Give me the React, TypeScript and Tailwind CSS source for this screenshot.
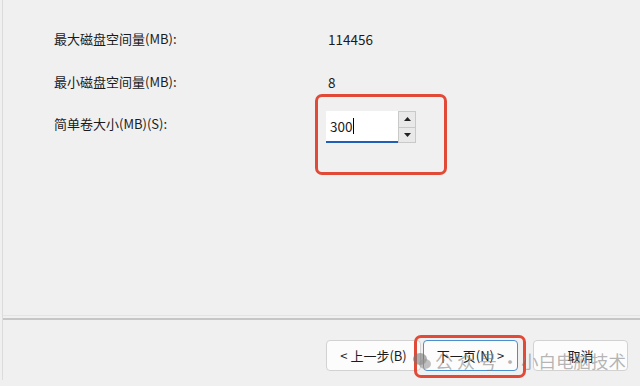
import React from "react";

const font = { fontFamily: '"Noto Sans CJK SC", "Noto Sans", sans-serif' };

function Spinner() {
  return (
    <div className="flex flex-col w-[18px] h-[32px] border border-[#c9c9c9] bg-[#f3f3f3]">
      <div className="flex-1 flex items-center justify-center border-b border-[#c9c9c9] bg-[#e9e9e9]">
        <svg width="7" height="4" viewBox="0 0 7 4"><polygon points="3.5,0 7,4 0,4" fill="#222" /></svg>
      </div>
      <div className="flex-1 flex items-center justify-center bg-[#e9e9e9]">
        <svg width="7" height="4" viewBox="0 0 7 4"><polygon points="0,0 7,0 3.5,4" fill="#222" /></svg>
      </div>
    </div>
  );
}

export default function App() {
  return (
    <div
      className="relative w-[640px] h-[386px] bg-[#f0f0f0] text-[#1b1b1b] overflow-hidden flex"
      style={font}
    >
      <div className="ml-[2px] w-[1px] bg-[#dcdcdc] h-[380px]" />
      <div className="flex-1 flex flex-col">
        <div className="h-[315px] pl-[51px] pt-[29px] flex flex-col text-[13px]">
          <div className="flex items-center h-[20px]">
            <div className="w-[274px]">最大磁盘空间量(MB):</div>
            <div className="text-[13.5px]">114456</div>
          </div>
          <div className="flex items-center h-[20px] mt-[23px]">
            <div className="w-[274px]">最小磁盘空间量(MB):</div>
            <div className="text-[13.5px]">8</div>
          </div>
          <div className="flex items-start mt-[19px]">
            <div className="w-[272px] h-[26px] leading-[26px]">简单卷大小(MB)(S):</div>
            <div className="flex">
              <div className="w-[72px] h-[32px] bg-white border-b-2 border-[#1f5fb8] flex items-center pl-[4px] text-[13.5px]">
                <span>300</span>
                <span className="w-[1px] h-[16px] bg-black ml-[1px]" />
              </div>
              <Spinner />
            </div>
          </div>
        </div>
        <div className="h-[1px] bg-[#e4e4e4]" />
        <div className="h-[2px] mt-[2px] bg-[#c6c6c6]" />
        <div className="flex justify-end items-start pt-[20px] pr-[12px] text-[13px]">
          <button className="w-[95px] h-[31px] bg-[#fcfcfc] border border-[#d2d2d2] rounded-[4px] flex items-center justify-center">
            &lt; 上一步(B)
          </button>
          <button className="ml-[2px] w-[95px] h-[31px] bg-[#fcfcfc] border border-[#4a8fd0] rounded-[4px] flex items-center justify-center">
            下一页(N) &gt;
          </button>
          <button className="ml-[15px] w-[95px] h-[31px] bg-[#fcfcfc] border border-[#d2d2d2] rounded-[4px] flex items-center justify-center">
            取消
          </button>
        </div>
      </div>

      {/* annotation boxes */}
      <div className="absolute left-[315px] top-[94px] w-[132px] h-[81px] border-[3px] border-[#e04a36] rounded-[7px]" />
      <div className="absolute left-[414px] top-[335px] w-[112px] h-[43px] border-[3px] border-[#e04a36] rounded-[7px]" />

      {/* watermark */}
      <div className="absolute left-[412px] top-[349px] flex items-center text-[18px] leading-[24px] text-[rgba(120,120,120,0.55)] pointer-events-none">
        <svg width="20" height="20" viewBox="0 0 20 20" className="mr-[3px]">
          <ellipse cx="8" cy="8" rx="7" ry="6" fill="rgba(120,120,120,0.6)" />
          <ellipse cx="13" cy="13" rx="6" ry="5" fill="rgba(150,150,150,0.6)" />
        </svg>
        <span className="tracking-[4px]">公众号</span>
        <span>·</span>
        <span className="ml-[2px] text-[17.5px]">小白电脑技术</span>
      </div>
    </div>
  );
}
